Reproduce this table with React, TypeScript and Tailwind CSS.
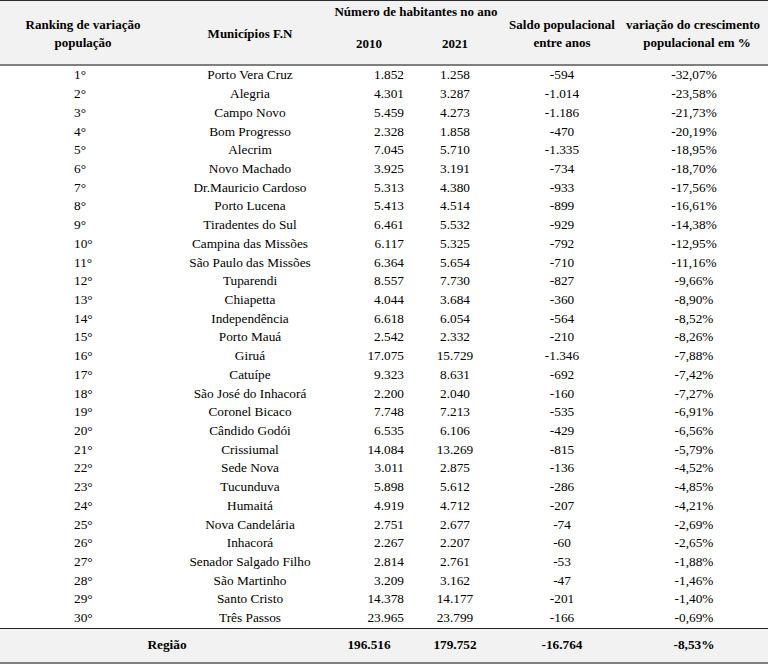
import React from "react";

const rows: [string, string, string, string, string, string][] = [
  ["1°", "Porto Vera Cruz", "1.852", "1.258", "-594", "-32,07%"],
  ["2°", "Alegria", "4.301", "3.287", "-1.014", "-23,58%"],
  ["3°", "Campo Novo", "5.459", "4.273", "-1.186", "-21,73%"],
  ["4°", "Bom Progresso", "2.328", "1.858", "-470", "-20,19%"],
  ["5°", "Alecrim", "7.045", "5.710", "-1.335", "-18,95%"],
  ["6°", "Novo Machado", "3.925", "3.191", "-734", "-18,70%"],
  ["7°", "Dr.Mauricio Cardoso", "5.313", "4.380", "-933", "-17,56%"],
  ["8°", "Porto Lucena", "5.413", "4.514", "-899", "-16,61%"],
  ["9°", "Tiradentes do Sul", "6.461", "5.532", "-929", "-14,38%"],
  ["10°", "Campina das Missões", "6.117", "5.325", "-792", "-12,95%"],
  ["11°", "São Paulo das Missões", "6.364", "5.654", "-710", "-11,16%"],
  ["12°", "Tuparendi", "8.557", "7.730", "-827", "-9,66%"],
  ["13°", "Chiapetta", "4.044", "3.684", "-360", "-8,90%"],
  ["14°", "Independência", "6.618", "6.054", "-564", "-8,52%"],
  ["15°", "Porto Mauá", "2.542", "2.332", "-210", "-8,26%"],
  ["16°", "Giruá", "17.075", "15.729", "-1.346", "-7,88%"],
  ["17°", "Catuípe", "9.323", "8.631", "-692", "-7,42%"],
  ["18°", "São José do Inhacorá", "2.200", "2.040", "-160", "-7,27%"],
  ["19°", "Coronel Bicaco", "7.748", "7.213", "-535", "-6,91%"],
  ["20°", "Cândido Godói", "6.535", "6.106", "-429", "-6,56%"],
  ["21°", "Crissiumal", "14.084", "13.269", "-815", "-5,79%"],
  ["22°", "Sede Nova", "3.011", "2.875", "-136", "-4,52%"],
  ["23°", "Tucunduva", "5.898", "5.612", "-286", "-4,85%"],
  ["24°", "Humaitá", "4.919", "4.712", "-207", "-4,21%"],
  ["25°", "Nova Candelária", "2.751", "2.677", "-74", "-2,69%"],
  ["26°", "Inhacorá", "2.267", "2.207", "-60", "-2,65%"],
  ["27°", "Senador Salgado Filho", "2.814", "2.761", "-53", "-1,88%"],
  ["28°", "São Martinho", "3.209", "3.162", "-47", "-1,46%"],
  ["29°", "Santo Cristo", "14.378", "14.177", "-201", "-1,40%"],
  ["30°", "Três Passos", "23.965", "23.799", "-166", "-0,69%"],
];

const cols = "grid grid-cols-[166px_168px_70px_102px_112px_150px]";

export default function App() {
  return (
    <div
      className="w-[768px] h-[667px] bg-white text-black overflow-hidden"
      style={{ fontFamily: '"Liberation Serif", "Times New Roman", serif' }}
    >
      <div className="border-t border-[#2a2a2a]">
        {/* Header */}
        <div className={`${cols} grid-rows-[20px_43px] bg-[#f2f2f2] text-[13px] font-bold leading-[18px] border-b-2 border-[#7f7f7f]`}>
          <div className="row-span-2 flex flex-col items-center justify-center text-center pt-[2px]">
            <span>Ranking de variação</span>
            <span>população</span>
          </div>
          <div className="row-span-2 flex items-center justify-center pt-[2px]">Municípios F.N</div>
          <div className="col-span-2 flex items-center justify-center pr-[8px] pt-[1px]">Número de habitantes no ano</div>
          <div className="row-span-2 flex flex-col items-center justify-center text-center pt-[2px]">
            <span>Saldo populacional</span>
            <span>entre anos</span>
          </div>
          <div className="row-span-2 flex flex-col items-center justify-center text-center pt-[2px]">
            <span>variação do crescimento</span>
            <span className="pl-[8px]">populacional em %</span>
          </div>
          <div className="flex items-center justify-center pt-[2px]">2010</div>
          <div className="flex items-center justify-center pt-[2px]">2021</div>
        </div>
        {/* Rows */}
        <div className="text-[13.3px]">
          {rows.map((r, i) => (
            <div key={i} className={`${cols} h-[18.72px] items-center leading-[18px]`}>
              <div className="pl-[74px] whitespace-nowrap">{r[0]}</div>
              <div className="text-center whitespace-nowrap">{r[1]}</div>
              <div className="text-right whitespace-nowrap">{r[2]}</div>
              <div className="text-center whitespace-nowrap">{r[3]}</div>
              <div className="text-center whitespace-nowrap">{r[4]}</div>
              <div className="text-center whitespace-nowrap pl-[2px]">{r[5]}</div>
            </div>
          ))}
        </div>
        {/* Footer */}
        <div className={`${cols} h-[36px] items-center bg-[#f2f2f2] border-t border-[#222] border-b-2 border-b-[#7f7f7f] text-[13.3px] font-bold`}>
          <div className="col-span-2 text-center">Região</div>
          <div className="text-center">196.516</div>
          <div className="text-center">179.752</div>
          <div className="text-center">-16.764</div>
          <div className="text-center pl-[2px]">-8,53%</div>
        </div>
      </div>
    </div>
  );
}
